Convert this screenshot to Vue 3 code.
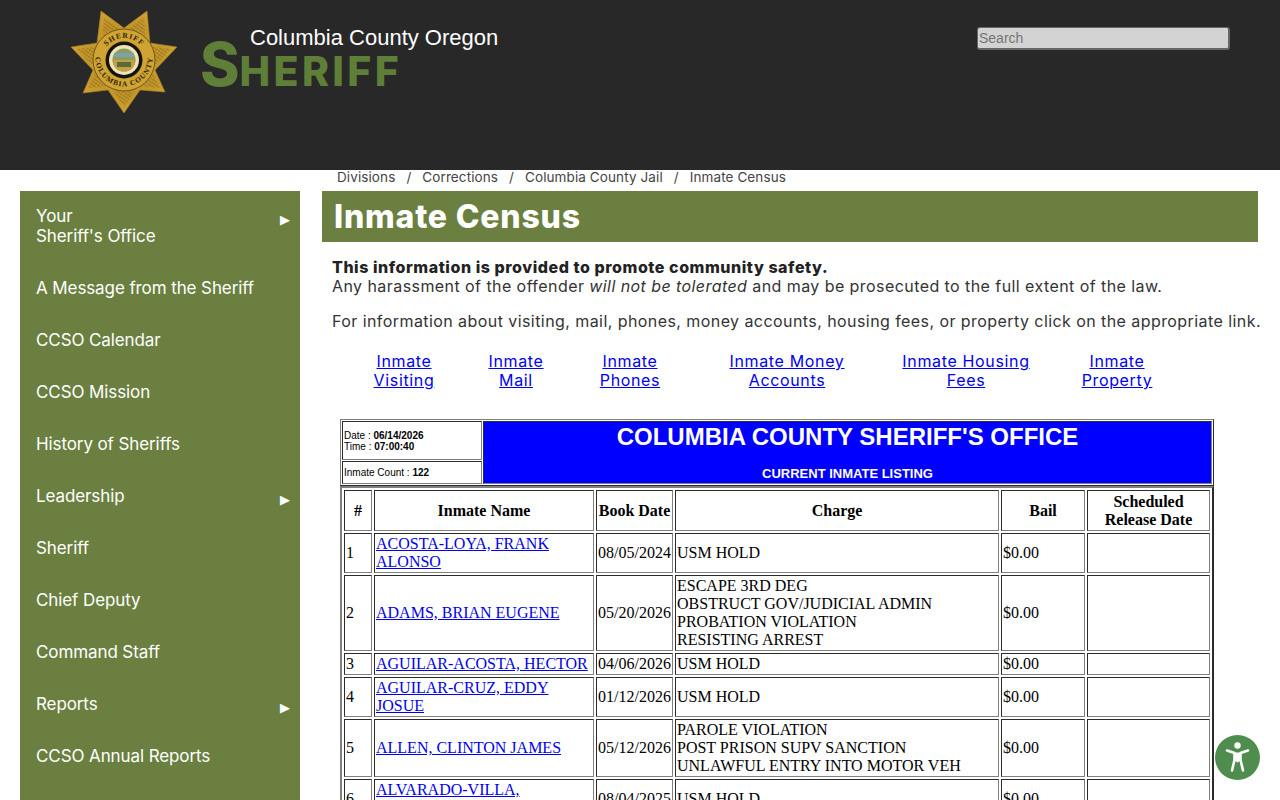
<template>
  <div class="page">
    <header class="top">
      <div class="brand">
        <svg class="badge" width="108" height="104" viewBox="71 10 108 104">
          <defs>
            <radialGradient id="gold" cx="50%" cy="48%" r="60%">
              <stop offset="0" stop-color="#d8ae3c" />
              <stop offset="0.6" stop-color="#c2962a" />
              <stop offset="1" stop-color="#d6a936" />
            </radialGradient>
            <pattern id="hatch" width="3" height="3" patternUnits="userSpaceOnUse" patternTransform="rotate(35)">
              <path d="M0 0V3M0 1.500H3" stroke="#7a5a12" stroke-width="0.6" />
            </pattern>
            <path id="arcTop" d="M102 60a22 22 0 0 1 44 0" />
            <path id="arcBottom" d="M95.500 58a28.500 28.500 0 0 0 57 0" />
          </defs>
          <polygon fill="url(#gold)" stroke="#a57f22" stroke-width="0.6" points="101,11 124,28 147,11 150,43 177,47 155,70 165,92 140,90 124,113 108,90 83,93 93,70 71,47 97,43" />
          <polygon fill="url(#hatch)" opacity="0.7" points="104,17 124,32 144,17 146,46 171,49 151,70 160,88 138,86 124,107 110,86 88,88 97,70 77,49 102,46" />
          <circle cx="124" cy="60" r="31" fill="#cfa433" stroke="#5a4513" stroke-width="0.8" />
          <text class="badge-text"><textPath href="#arcTop" startOffset="50%" text-anchor="middle">SHERIFF</textPath></text>
          <text class="badge-text"><textPath href="#arcBottom" startOffset="50%" text-anchor="middle">COLUMBIA COUNTY</textPath></text>
          <circle cx="124" cy="60" r="18.500" fill="#17140d" />
          <circle cx="124" cy="60" r="15" fill="#efe4b8" />
          <circle cx="124" cy="60" r="11.500" fill="#8aa05a" />
          <path d="M112.500 60a11.500 11.500 0 0 0 23 0z" fill="#c2a04a" />
          <path d="M114 53h20v4h-20z" fill="#7fa0b0" />
          <path d="M117 62h14v5h-14z" fill="#5d6a34" />
        </svg>
        <div class="wordmark">
          <div class="county">Columbia County Oregon</div>
          <div class="sheriff"><span class="big-s">S</span>HERIFF</div>
        </div>
      </div>
      <input class="search" type="text" placeholder="Search" />
    </header>

    <div class="main">
      <aside class="side">
        <ul>
          <li v-for="item in menu" :key="item.label" :class="{ first: item.first }">
            <span class="label" v-html="item.label"></span>
            <span v-if="item.sub" class="arrow">▶</span>
          </li>
        </ul>
      </aside>

      <section class="content">
        <nav class="crumbs">
          <span>Divisions</span><i>/</i><span>Corrections</span><i>/</i><span>Columbia County Jail</span><i>/</i><span>Inmate Census</span>
        </nav>
        <h1>Inmate Census</h1>
        <div class="intro">
          <p><b>This information is provided to promote community safety.</b><br />
            Any harassment of the offender <em>will not be tolerated</em> and may be prosecuted to the full extent of the law.</p>
          <p>For information about visiting, mail, phones, money accounts, housing fees, or property click on the appropriate link.</p>
        </div>
        <div class="links">
          <a v-for="l in links" :key="l[0] + l[1]" href="#">{{ l[0] }}<br />{{ l[1] }}</a>
        </div>

        <table class="head-table">
          <colgroup><col class="c-date" /><col /></colgroup>
          <tbody>
            <tr>
              <td class="stamp">Date : <b>06/14/2026</b><br />Time : <b>07:00:40</b></td>
              <td class="banner" rowspan="2">
                <div class="banner-title">COLUMBIA COUNTY SHERIFF'S OFFICE</div>
                <div class="banner-sub">CURRENT INMATE LISTING</div>
              </td>
            </tr>
            <tr>
              <td class="stamp count">Inmate Count : <b>122</b></td>
            </tr>
          </tbody>
        </table>

        <table class="roster">
          <thead>
            <tr>
              <th class="w-num">#</th>
              <th class="w-name">Inmate Name</th>
              <th class="w-book">Book Date</th>
              <th class="w-charge">Charge</th>
              <th class="w-bail">Bail</th>
              <th class="w-rel">Scheduled<br />Release Date</th>
            </tr>
          </thead>
          <tbody>
            <tr v-for="row in inmates" :key="row.n">
              <td>{{ row.n }}</td>
              <td><a href="#" v-html="row.name"></a></td>
              <td>{{ row.date }}</td>
              <td v-html="row.charge"></td>
              <td>$0.00</td>
              <td></td>
            </tr>
          </tbody>
        </table>
      </section>
    </div>

    <button class="a11y" aria-label="Accessibility">
      <svg width="45" height="45" viewBox="0 0 45 45">
        <circle cx="22.500" cy="22.500" r="22.500" fill="#4f8d4f" />
        <circle cx="22.500" cy="10.500" r="3.200" fill="#fff" />
        <path d="M12 15.500l7.500 2.500v7l-2.500 10.500M33 15.500l-7.500 2.500v7l2.500 10.500" fill="none" stroke="#fff" stroke-width="2.600" stroke-linecap="round" stroke-linejoin="round" />
        <path d="M19.500 17.500h6v8l-3 2-3-2z" fill="#fff" />
      </svg>
    </button>
  </div>
</template>

<script setup>
const menu = [
  { label: 'Your<br>Sheriff\'s Office', sub: true, first: true },
  { label: 'A Message from the Sheriff' },
  { label: 'CCSO Calendar' },
  { label: 'CCSO Mission' },
  { label: 'History of Sheriffs' },
  { label: 'Leadership', sub: true },
  { label: 'Sheriff' },
  { label: 'Chief Deputy' },
  { label: 'Command Staff' },
  { label: 'Reports', sub: true },
  { label: 'CCSO Annual Reports' },
]

const links = [
  ['Inmate', 'Visiting'],
  ['Inmate', 'Mail'],
  ['Inmate', 'Phones'],
  ['Inmate Money', 'Accounts'],
  ['Inmate Housing', 'Fees'],
  ['Inmate', 'Property'],
]

const inmates = [
  { n: 1, name: 'ACOSTA-LOYA, FRANK ALONSO', date: '08/05/2024', charge: 'USM HOLD' },
  { n: 2, name: 'ADAMS, BRIAN EUGENE', date: '05/20/2026', charge: 'ESCAPE 3RD DEG<br>OBSTRUCT GOV/JUDICIAL ADMIN<br>PROBATION VIOLATION<br>RESISTING ARREST' },
  { n: 3, name: 'AGUILAR-ACOSTA, HECTOR', date: '04/06/2026', charge: 'USM HOLD' },
  { n: 4, name: 'AGUILAR-CRUZ, EDDY JOSUE', date: '01/12/2026', charge: 'USM HOLD' },
  { n: 5, name: 'ALLEN, CLINTON JAMES', date: '05/12/2026', charge: 'PAROLE VIOLATION<br>POST PRISON SUPV SANCTION<br>UNLAWFUL ENTRY INTO MOTOR VEH' },
  { n: 6, name: 'ALVARADO-VILLA,<br>&nbsp;', date: '08/04/2025', charge: 'USM HOLD' },
]
</script>

<style>
html, body {
  margin: 0;
  background: #fff;
}
</style>

<style scoped>
.page {
  font-family: Inter, "Liberation Sans", sans-serif;
  color: #333;
  height: 800px;
  overflow: hidden;
}

.top {
  height: 170px;
  background: #282828;
  display: flex;
  justify-content: space-between;
  align-items: flex-start;
  padding: 10px 50px 0 71px;
  box-sizing: border-box;
}
.brand {
  display: flex;
  align-items: flex-start;
}
.badge-text {
  font: bold 7.500px "Liberation Serif", serif;
  letter-spacing: 1px;
  fill: #2a1f08;
}
.wordmark {
  margin-left: 21px;
  margin-top: 15px;
}
.county {
  font: 22px/26px "Liberation Sans", sans-serif;
  color: #fff;
  margin-left: 50px;
}
.sheriff {
  font-family: Inter, sans-serif;
  font-weight: 800;
  font-size: 41px;
  line-height: 44px;
  letter-spacing: 3.300px;
  color: #5f7f39;
  margin-top: -9px;
}
.big-s {
  font-size: 60px;
  letter-spacing: 0;
}
.search {
  width: 253px;
  height: 23px;
  box-sizing: border-box;
  margin-top: 17px;
  padding: 1px;
  background: #d3d3d3;
  border: 2px solid #666;
  border-width: 1px 2px 2px 1px;
  border-radius: 3px;
  font: 14px "Liberation Sans", sans-serif;
  color: #333;
}
.search::placeholder {
  color: #757575;
}

.main {
  display: flex;
  align-items: flex-start;
}

.side {
  width: 280px;
  margin: 21px 0 0 20px;
  background: #6b8040;
  color: #fff;
  min-height: 700px;
}
.side ul {
  list-style: none;
  margin: 0;
  padding: 0;
}
.side li {
  display: flex;
  justify-content: space-between;
  align-items: flex-start;
  padding: 16px 10px 16px 16px;
  font-size: 17px;
  line-height: 20px;
  letter-spacing: -0.100px;
}
.side li.first {
  padding-top: 15px;
}
.arrow {
  font: 13px/13px "DejaVu Sans", sans-serif;
  margin-top: 7px;
}

.content {
  width: 936px;
  margin-left: 22px;
  font-size: 16px;
}
.crumbs {
  height: 21px;
  padding-left: 15px;
  font-size: 13.500px;
  line-height: 15px;
  letter-spacing: 0.100px;
  color: #444;
}
.crumbs i {
  font-style: normal;
  margin: 0 11px;
}
h1 {
  margin: 0;
  height: 51px;
  padding-left: 12px;
  background: #6b8040;
  color: #fff;
  font-size: 32px;
  line-height: 51px;
  font-weight: 800;
  letter-spacing: 0.800px;
}
.intro {
  margin: 16px 0 0 10px;
  white-space: nowrap;
  line-height: 19px;
  letter-spacing: 0.430px;
}
.intro p {
  margin: 0 0 16px;
}
.intro b {
  color: #222;
  font-weight: 800;
  letter-spacing: 0.550px;
}
.links {
  display: grid;
  grid-template-columns: 114px 110px 118px 196px 162px 140px;
  margin: 21px 0 0 25px;
  line-height: 19px;
  letter-spacing: 0.650px;
  text-align: center;
}
.links a,
.roster a {
  color: #0000ee;
}

table {
  border-collapse: separate;
  table-layout: fixed;
  width: 874px;
  margin-left: 18px;
  font-family: "Liberation Serif", serif;
  color: #000;
}
td, th {
  box-sizing: border-box;
  border: 1px inset #808080;
  padding: 1px;
}

.head-table {
  margin-top: 29px;
  border: 1px outset #808080;
  border-spacing: 1px;
}
.c-date {
  width: 140px;
}
.stamp {
  font: 10px/11px "Liberation Sans", sans-serif;
  height: 39px;
}
.stamp.count {
  height: 23px;
}
.banner {
  background: #0000ff;
  color: #fff;
  text-align: center;
  font-family: "Liberation Sans", sans-serif;
  font-weight: bold;
  vertical-align: top;
}
.banner-title {
  font-size: 24px;
  line-height: 28px;
}
.banner-sub {
  font-size: 13px;
  line-height: 16px;
  margin-top: 15px;
}

.roster {
  border: 2px outset #808080;
  border-spacing: 2px;
  font-size: 16px;
  line-height: 18px;
}
.roster th {
  height: 41px;
  font-weight: bold;
}
.w-num { width: 28px; }
.w-name { width: 220px; }
.w-book { width: 77px; }
.w-charge { width: 324px; }
.w-bail { width: 84px; }
.w-rel { width: 123px; }

.a11y {
  position: fixed;
  left: 1215px;
  top: 735px;
  width: 45px;
  height: 45px;
  padding: 0;
  border: 0;
  background: none;
}
.a11y svg {
  display: block;
}
</style>
